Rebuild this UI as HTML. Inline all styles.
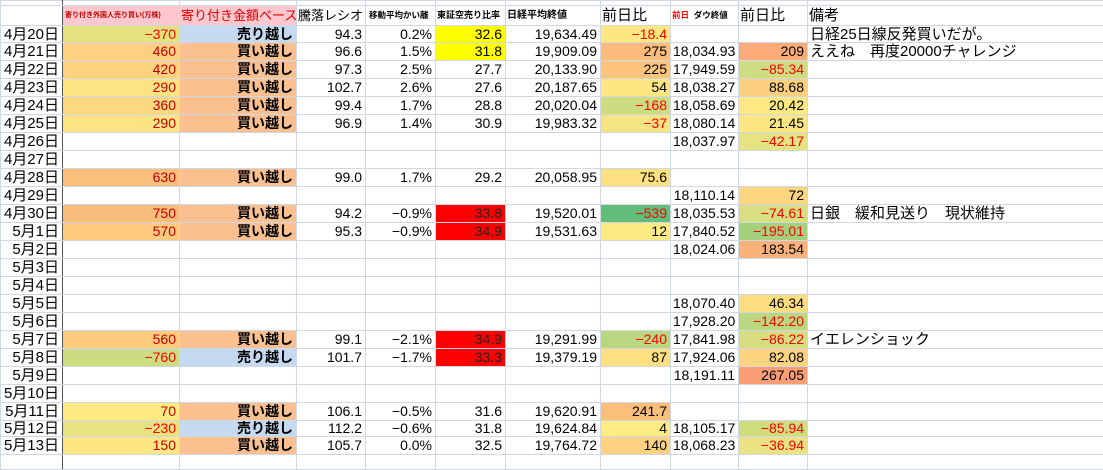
<!DOCTYPE html>
<html><head><meta charset="utf-8">
<style>
html,body{margin:0;padding:0;background:#fff;}
body{width:1103px;height:469px;overflow:hidden;font-family:"Liberation Sans","Noto Sans CJK JP",sans-serif;}
table{border-collapse:collapse;table-layout:fixed;width:1103px;}
td{border:1px solid #d0d7e5;padding:0 3px 0 2px;font-size:14px;line-height:15px;white-space:nowrap;overflow:hidden;text-align:right;color:#000;}
td.a{border-right:1px solid #555;font-size:15px;}
td.k{text-align:left;font-size:15px;}
.r{color:#ff0000}.dr{color:#c00000}
.b{font-weight:bold;font-size:14px}
.u{background:#c5d9f1}.v{background:#fac090}
.y{background:#ffff00}.rd{background:#ff0000;color:#222}
.h td{text-align:left;padding:0 1px;}
</style></head><body>
<table>
<colgroup><col style="width:62px"><col style="width:117px"><col style="width:117px"><col style="width:69px"><col style="width:70px"><col style="width:70px"><col style="width:95px"><col style="width:70px"><col style="width:68px"><col style="width:69px"><col style="width:296px"></colgroup>
<tr style="height:5px"><td class="a"></td><td></td><td></td><td></td><td></td><td></td><td></td><td></td><td></td><td></td><td></td></tr>
<tr class="h" style="height:20px"><td class="a"></td>
<td style="background:#ffc7ce;color:#c00000;font-size:7px;font-weight:bold;padding-left:2px">寄り付き外国人売り買い(万株)</td>
<td style="background:#ffc7ce;color:#e00000;font-size:13px;">寄り付き金額ベース</td>
<td style="font-size:13px">騰落レシオ</td>
<td style="font-size:8.5px;font-weight:bold;padding-left:3px">移動平均かい離</td>
<td style="font-size:9px;font-weight:bold">東証空売り比率</td>
<td style="font-size:10px;font-weight:bold">日経平均終値</td>
<td style="font-size:15px">前日比</td>
<td style="font-size:8.5px;font-weight:bold"><span class="r">前日</span>&nbsp; ダウ終値</td>
<td style="font-size:15px">前日比</td>
<td style="font-size:15px">備考</td></tr>

<tr style="height:17px"><td class="a">4月20日</td><td class="r" style="background:#e3e27f">−370</td><td class="b u">売り越し</td><td>94.3</td><td>0.2%</td><td class="y">32.6</td><td>19,634.49</td><td class="r" style="background:#fde783">−18.4</td><td></td><td></td><td class="k">日経25日線反発買いだが。</td></tr>
<tr style="height:18px"><td class="a">4月21日</td><td class="dr" style="background:#fdd17f">460</td><td class="b v">買い越し</td><td>96.6</td><td>1.5%</td><td class="y">31.8</td><td>19,909.09</td><td style="background:#fbbb7b">275</td><td>18,034.93</td><td style="background:#fbab77">209</td><td class="k">ええね　再度20000チャレンジ</td></tr>
<tr style="height:18px"><td class="a">4月22日</td><td class="dr" style="background:#fdd27f">420</td><td class="b v">買い越し</td><td>97.3</td><td>2.5%</td><td>27.7</td><td>20,133.90</td><td style="background:#fcc47d">225</td><td>17,949.59</td><td class="r" style="background:#cfdc81">−85.34</td><td class="k"></td></tr>
<tr style="height:18px"><td class="a">4月23日</td><td class="dr" style="background:#fee382">290</td><td class="b v">買い越し</td><td>102.7</td><td>2.6%</td><td>27.6</td><td>20,187.65</td><td style="background:#fee683">54</td><td>18,038.27</td><td style="background:#fdd07f">88.68</td><td class="k"></td></tr>
<tr style="height:18px"><td class="a">4月24日</td><td class="dr" style="background:#fdd881">360</td><td class="b v">買い越し</td><td>99.4</td><td>1.7%</td><td>28.8</td><td>20,020.04</td><td class="r" style="background:#cddc80">−168</td><td>18,058.69</td><td style="background:#fde883">20.42</td><td class="k"></td></tr>
<tr style="height:18px"><td class="a">4月25日</td><td class="dr" style="background:#fee382">290</td><td class="b v">買い越し</td><td>96.9</td><td>1.4%</td><td>30.9</td><td>19,983.32</td><td class="r" style="background:#f4e482">−37</td><td>18,080.14</td><td style="background:#fde783">21.45</td><td class="k"></td></tr>
<tr style="height:18px"><td class="a">4月26日</td><td></td><td></td><td></td><td></td><td></td><td></td><td></td><td>18,037.97</td><td class="r" style="background:#e6e383">−42.17</td><td class="k"></td></tr>
<tr style="height:18px"><td class="a">4月27日</td><td></td><td></td><td></td><td></td><td></td><td></td><td></td><td></td><td></td><td class="k"></td></tr>
<tr style="height:18px"><td class="a">4月28日</td><td class="dr" style="background:#fbbf7b">630</td><td class="b v">買い越し</td><td>99.0</td><td>1.7%</td><td>29.2</td><td>20,058.95</td><td style="background:#fee182">75.6</td><td></td><td></td><td class="k"></td></tr>
<tr style="height:18px"><td class="a">4月29日</td><td></td><td></td><td></td><td></td><td></td><td></td><td></td><td>18,110.14</td><td style="background:#fdd581">72</td><td class="k"></td></tr>
<tr style="height:18px"><td class="a">4月30日</td><td class="dr" style="background:#f9bd7b">750</td><td class="b v">買い越し</td><td>94.2</td><td>−0.9%</td><td class="rd">33.8</td><td>19,520.01</td><td class="r" style="background:#63be7b">−539</td><td>18,035.53</td><td class="r" style="background:#d8df81">−74.61</td><td class="k">日銀　緩和見送り　現状維持</td></tr>
<tr style="height:18px"><td class="a">5月1日</td><td class="dr" style="background:#fdca7e">570</td><td class="b v">買い越し</td><td>95.3</td><td>−0.9%</td><td class="rd">34.9</td><td>19,531.63</td><td style="background:#feea83">12</td><td>17,840.52</td><td class="r" style="background:#a5d07e">−195.01</td><td class="k"></td></tr>
<tr style="height:18px"><td class="a">5月2日</td><td></td><td></td><td></td><td></td><td></td><td></td><td></td><td>18,024.06</td><td style="background:#fbb27a">183.54</td><td class="k"></td></tr>
<tr style="height:18px"><td class="a">5月3日</td><td></td><td></td><td></td><td></td><td></td><td></td><td></td><td></td><td></td><td class="k"></td></tr>
<tr style="height:18px"><td class="a">5月4日</td><td></td><td></td><td></td><td></td><td></td><td></td><td></td><td></td><td></td><td class="k"></td></tr>
<tr style="height:18px"><td class="a">5月5日</td><td></td><td></td><td></td><td></td><td></td><td></td><td></td><td>18,070.40</td><td style="background:#fedd81">46.34</td><td class="k"></td></tr>
<tr style="height:18px"><td class="a">5月6日</td><td></td><td></td><td></td><td></td><td></td><td></td><td></td><td>17,928.20</td><td class="r" style="background:#bbd780">−142.20</td><td class="k"></td></tr>
<tr style="height:18px"><td class="a">5月7日</td><td class="dr" style="background:#fdca7e">560</td><td class="b v">買い越し</td><td>99.1</td><td>−2.1%</td><td class="rd">34.9</td><td>19,291.99</td><td class="r" style="background:#b9d780">−240</td><td>17,841.98</td><td class="r" style="background:#d6de81">−86.22</td><td class="k">イエレンショック</td></tr>
<tr style="height:18px"><td class="a">5月8日</td><td class="r" style="background:#cbdd80">−760</td><td class="b u">売り越し</td><td>101.7</td><td>−1.7%</td><td class="rd">33.3</td><td>19,379.19</td><td style="background:#fee081">87</td><td>17,924.06</td><td style="background:#fdd37f">82.08</td><td class="k"></td></tr>
<tr style="height:18px"><td class="a">5月9日</td><td></td><td></td><td></td><td></td><td></td><td></td><td></td><td>18,191.11</td><td style="background:#fa9d75">267.05</td><td class="k"></td></tr>
<tr style="height:18px"><td class="a">5月10日</td><td></td><td></td><td></td><td></td><td></td><td></td><td></td><td></td><td></td><td class="k"></td></tr>
<tr style="height:18px"><td class="a">5月11日</td><td class="dr" style="background:#fee983">70</td><td class="b v">買い越し</td><td>106.1</td><td>−0.5%</td><td>31.6</td><td>19,620.91</td><td style="background:#fbbf7b">241.7</td><td></td><td></td><td class="k"></td></tr>
<tr style="height:16px"><td class="a">5月12日</td><td class="r" style="background:#e8e283">−230</td><td class="b u">売り越し</td><td>112.2</td><td>−0.6%</td><td>31.8</td><td>19,624.84</td><td style="background:#feeb84">4</td><td>18,105.17</td><td class="r" style="background:#d0dc80">−85.94</td><td class="k"></td></tr>
<tr style="height:18px"><td class="a">5月13日</td><td class="dr" style="background:#fee683">150</td><td class="b v">買い越し</td><td>105.7</td><td>0.0%</td><td>32.5</td><td>19,764.72</td><td style="background:#fed280">140</td><td>18,068.23</td><td class="r" style="background:#e9e384">−36.94</td><td class="k"></td></tr>
<tr style="height:15px"><td class="a"></td><td></td><td></td><td></td><td></td><td></td><td></td><td></td><td></td><td></td><td class="k"></td></tr>
</table>
</body></html>
